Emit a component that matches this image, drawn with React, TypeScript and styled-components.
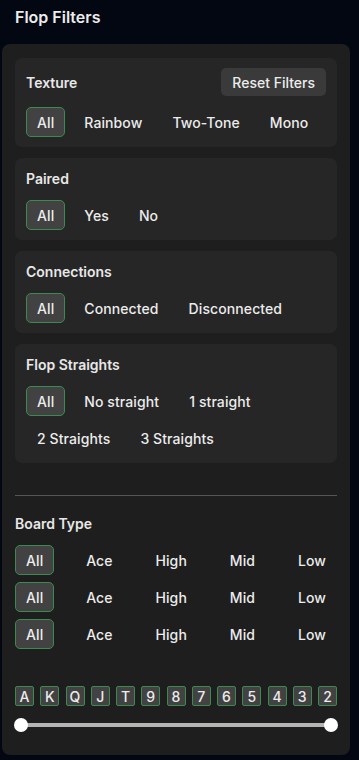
import styled, { createGlobalStyle } from "styled-components";

const GlobalStyle = createGlobalStyle`
	* { box-sizing: border-box; }
	body {
		margin: 0;
		background: #030712;
		font-family: Inter, "Noto Sans", sans-serif;
		color: #e8e8e8;
	}
`;

type Group = { title: string; options: string[]; reset?: boolean };

const groups: Group[] = [
	{ title: "Texture", options: ["All", "Rainbow", "Two-Tone", "Mono"], reset: true },
	{ title: "Paired", options: ["All", "Yes", "No"] },
	{ title: "Connections", options: ["All", "Connected", "Disconnected"] },
	{ title: "Flop Straights", options: ["All", "No straight", "1 straight", "2 Straights", "3 Straights"] },
];

const boardRows = [0, 1, 2];
const boardOptions = ["All", "Ace", "High", "Mid", "Low"];
const ranks = ["A", "K", "Q", "J", "T", "9", "8", "7", "6", "5", "4", "3", "2"];

export default function App() {
	return (
		<>
			<GlobalStyle />
			<Page>
				<Heading>Flop Filters</Heading>
				<Panel>
					{groups.map((g) => (
						<Card key={g.title}>
							<CardHead>
								<CardTitle>{g.title}</CardTitle>
								{g.reset ? <ResetButton>Reset Filters</ResetButton> : null}
							</CardHead>
							<Options>
								{g.options.map((o, i) => (
									<Option key={o} $active={i === 0}>
										{o}
									</Option>
								))}
							</Options>
						</Card>
					))}
					<Divider />
					<SectionTitle>Board Type</SectionTitle>
					<BoardRows>
						{boardRows.map((r) => (
							<BoardRow key={r}>
								{boardOptions.map((o, i) => (
									<Option key={o} $active={i === 0}>
										{o}
									</Option>
								))}
							</BoardRow>
						))}
					</BoardRows>
					<Ranks>
						{ranks.map((r) => (
							<Rank key={r}>{r}</Rank>
						))}
					</Ranks>
					<Slider>
						<Track />
						<Thumb style={{ left: 0 }} />
						<Thumb style={{ right: 0 }} />
					</Slider>
				</Panel>
			</Page>
		</>
	);
}

const Page = styled.div`
	width: 359px;
	min-height: 760px;
	display: flex;
	flex-direction: column;
`;

const Heading = styled.h1`
	margin: 0;
	height: 44px;
	padding: 7px 15px 0;
	font-size: 16px;
	font-weight: 600;
	line-height: 20px;
	color: #ececec;
`;

const Panel = styled.div`
	margin: 0 9px 0 2px;
	height: 711px;
	background: #1e1e1e;
	border-radius: 8px;
	padding: 14px 13px 0;
	display: flex;
	flex-direction: column;
	gap: 11px;
`;

const Card = styled.div`
	background: #262626;
	border-radius: 7px;
	padding: 10px 11px;
	display: flex;
	flex-direction: column;
	gap: 11px;
`;

const CardHead = styled.div`
	display: flex;
	justify-content: space-between;
	align-items: center;
	min-height: 21px;
`;

const CardTitle = styled.div`
	font-size: 14px;
	font-weight: 600;
	line-height: 21px;
`;

const ResetButton = styled.button`
	height: 28px;
	padding: 0 11px;
	border: none;
	border-radius: 5px;
	background: #3a3a3a;
	color: #ececec;
	font-family: inherit;
	font-size: 14px;
	font-weight: 500;
`;

const Options = styled.div`
	display: flex;
	flex-wrap: wrap;
	gap: 7px 8px;
`;

const Option = styled.button<{ $active?: boolean }>`
	height: 30px;
	padding: 0 10px;
	border-radius: 5px;
	border: 1px solid ${(p) => (p.$active ? "#3b8a50" : "transparent")};
	background: ${(p) => (p.$active ? "#424242" : "transparent")};
	color: #ececec;
	font-family: inherit;
	font-size: 14px;
	font-weight: 500;
	letter-spacing: 0.1px;
	white-space: nowrap;
`;

const Divider = styled.div`
	height: 1px;
	background: #565656;
	margin-top: 21px;
`;

const SectionTitle = styled.div`
	margin-top: 6px;
	font-size: 14px;
	font-weight: 600;
	line-height: 21px;
`;

const BoardRows = styled.div`
	display: flex;
	flex-direction: column;
	gap: 7px;
`;

const BoardRow = styled.div`
	display: flex;
	justify-content: space-between;
`;

const Ranks = styled.div`
	margin-top: 26px;
	display: flex;
	justify-content: space-between;
`;

const Rank = styled.div`
	width: 19px;
	height: 20px;
	border: 1px solid #3b8a50;
	border-radius: 2px;
	background: #424242;
	display: flex;
	align-items: center;
	justify-content: center;
	font-size: 14px;
	font-weight: 500;
	color: #ececec;
`;

const Slider = styled.div`
	position: relative;
	height: 14px;
	margin: 1px -1px 0;
`;

const Track = styled.div`
	position: absolute;
	left: 7px;
	right: 7px;
	top: 5px;
	height: 4px;
	background: #b4b4b4;
	border-radius: 2px;
`;

const Thumb = styled.div`
	position: absolute;
	top: 0;
	width: 14px;
	height: 14px;
	border-radius: 50%;
	background: #ffffff;
`;
